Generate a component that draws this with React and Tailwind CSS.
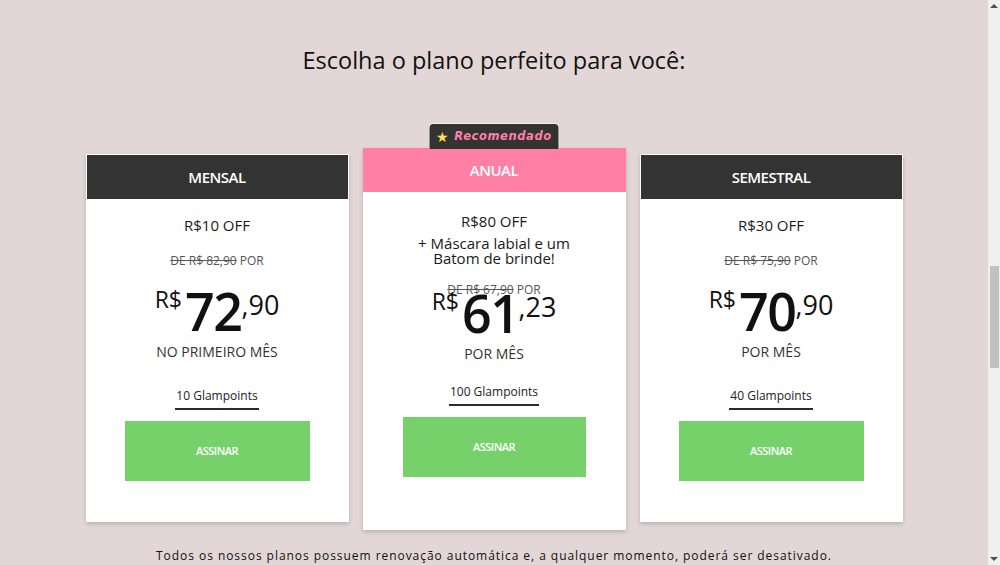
import React from "react";

const font = { fontFamily: '"Open Sans", "Liberation Sans", sans-serif' };

function Price({ int, dec }) {
  return (
    <div className="flex items-start justify-center text-[#111]">
      <span className="text-[23px] leading-none mt-[3px] mr-[3px]">R$</span>
      <span className="text-[52px] leading-none font-semibold tracking-[-1.5px]">{int}</span>
      <span className="text-[27px] leading-none mt-[6px]">,{dec}</span>
    </div>
  );
}

function Glampoints({ children }) {
  return (
    <div className="flex justify-center">
      <span className="inline-block border-b-2 border-[#2b2b2b] px-[1px] pb-[4px] text-[12px] leading-[16px] text-[#222]">
        {children}
      </span>
    </div>
  );
}

function Button() {
  return (
    <div className="h-[60px] bg-[#77d16b] flex items-center justify-center text-white text-[11px] font-semibold tracking-[-0.5px]">
      ASSINAR
    </div>
  );
}

function Side({ title, off, de, int, dec, per, points }) {
  return (
    <div className="mt-[6px] w-[263px] h-[368px] bg-white border border-white shadow-[0_2px_4px_rgba(0,0,0,0.18)] flex flex-col">
      <div className="h-[44px] bg-[#333333] flex items-center justify-center text-white text-[15px] font-semibold tracking-[-0.5px]">
        {title}
      </div>
      <div className="mt-[16px] text-center text-[15px] leading-[20px] text-[#1a1a1a]">{off}</div>
      <div className="mt-[18px] text-center text-[12px] leading-[16px] text-[#555]">
        <span className="line-through">DE R$ {de}</span> POR
      </div>
      <div className="mt-[16px]">
        <Price int={int} dec={dec} />
      </div>
      <div className="mt-[5px] text-center text-[14px] leading-[20px] text-[#333]">{per}</div>
      <div className="mt-[26px]">
        <Glampoints>{points}</Glampoints>
      </div>
      <div className="mt-[11px] px-[38px]">
        <Button />
      </div>
    </div>
  );
}

function Featured() {
  return (
    <div className="relative w-[263px] h-[382px] bg-white shadow-[0_2px_4px_rgba(0,0,0,0.18)] flex flex-col">
      <div className="absolute -top-[25px] left-1/2 -translate-x-1/2 w-[131px] h-[26px] bg-[#333333] border border-[#f2f2f2] border-b-0 rounded-t-[5px] flex items-center justify-center gap-[5px]">
        <span className="text-[#ffe04a] text-[14px] leading-none">★</span>
        <span
          className="text-[#ff7fa5] text-[11.5px] italic font-bold tracking-[0.6px] leading-none"
          style={{ fontFamily: '"DejaVu Sans", "Open Sans", sans-serif' }}
        >
          Recomendado
        </span>
      </div>
      <div className="h-[44px] bg-[#ff7fa5] flex items-center justify-center text-white text-[15px] font-semibold tracking-[-0.5px]">
        ANUAL
      </div>
      <div className="mt-[19px] text-center text-[15px] leading-[20px] text-[#1a1a1a]">R$80 OFF</div>
      <div className="mt-[5px] text-center text-[15px] leading-[15px] text-[#1a1a1a]">
        + Máscara labial e um
        <br />
        Batom de brinde!
      </div>
      <div className="mt-[16px] text-center text-[12px] leading-[16px] text-[#555]">
        <span className="line-through">DE R$ 67,90</span> POR
      </div>
      <div className="-mt-[11px]">
        <Price int="61" dec="23" />
      </div>
      <div className="mt-[5px] text-center text-[14px] leading-[20px] text-[#333]">POR MÊS</div>
      <div className="mt-[20px]">
        <Glampoints>100 Glampoints</Glampoints>
      </div>
      <div className="mt-[11px] px-[40px]">
        <Button />
      </div>
    </div>
  );
}

export default function App() {
  return (
    <div className="w-[1000px] h-[565px] overflow-hidden flex bg-[#e2d7d6]" style={font}>
      <div className="flex-1 flex flex-col items-center">
        <h1 className="mt-[44px] text-[23.5px] leading-[32px] text-[#111] font-normal">
          Escolha o plano perfeito para você:
        </h1>
        <div className="mt-[72px] flex items-start gap-[14px]">
          <Side title="MENSAL" off="R$10 OFF" de="82,90" int="72" dec="90" per="NO PRIMEIRO MÊS" points="10 Glampoints" />
          <Featured />
          <Side title="SEMESTRAL" off="R$30 OFF" de="75,90" int="70" dec="90" per="POR MÊS" points="40 Glampoints" />
        </div>
        <p className="mt-[18px] text-[12px] leading-[16px] tracking-[0.95px] text-[#111]">
          Todos os nossos planos possuem renovação automática e, a qualquer momento, poderá ser desativado.
        </p>
      </div>
      <div className="w-[12px] h-full bg-[#f0f0f0] flex flex-col items-center">
        <div className="mt-[4px] w-0 h-0 border-l-[4px] border-r-[4px] border-b-[4px] border-l-transparent border-r-transparent border-b-[#505050]" />
        <div className="mt-[258px] w-[9px] h-[102px] bg-[#c1c1c1] ml-[1px]" />
        <div className="mt-auto mb-[4px] w-0 h-0 border-l-[4px] border-r-[4px] border-t-[4px] border-l-transparent border-r-transparent border-t-[#505050]" />
      </div>
    </div>
  );
}
